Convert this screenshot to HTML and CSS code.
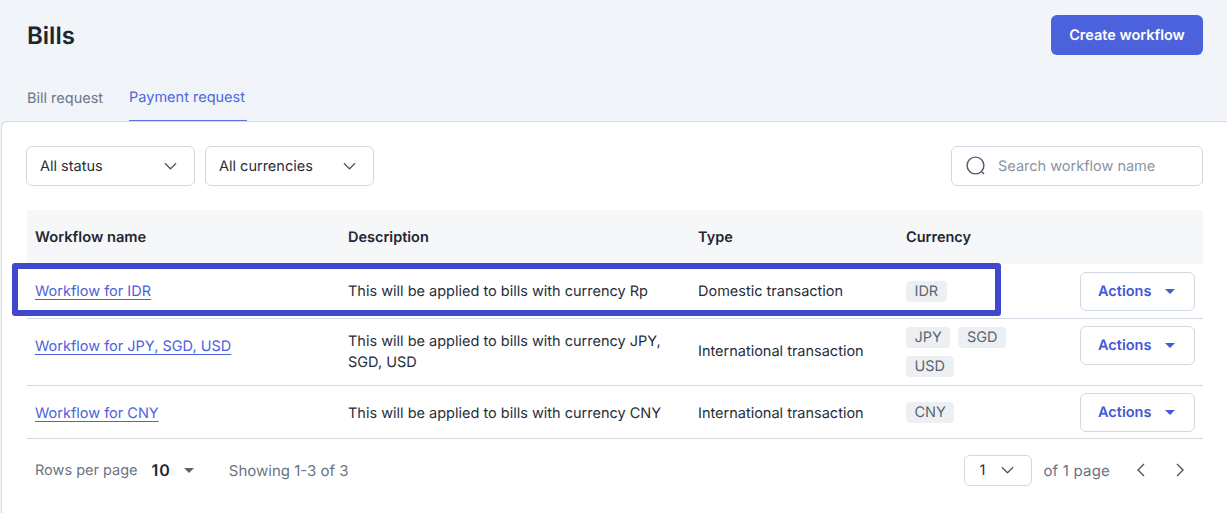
FILE: index.html
```html
<!DOCTYPE html>
<html lang="en">
<head>
<meta charset="utf-8">
<title>Bills</title>
<link rel="stylesheet" href="styles.css">
</head>
<body>
<header class="top">
  <h1 class="title">Bills</h1>
  <button class="primary">Create workflow</button>
</header>
<nav class="tabs">
  <a class="tab">Bill request</a>
  <a class="tab active">Payment request</a>
</nav>
<main class="card">
  <div class="filters">
    <div class="select status"><span>All status</span><svg class="chev" viewBox="0 0 14 8"><path d="M1 1l6 6 6-6"/></svg></div>
    <div class="select currency"><span>All currencies</span><svg class="chev" viewBox="0 0 14 8"><path d="M1 1l6 6 6-6"/></svg></div>
    <div class="search">
      <svg class="search-icon" viewBox="0 0 20 20"><circle cx="9.5" cy="9.5" r="8.4"/><path d="M16 16l2 2"/></svg>
      <span>Search workflow name</span>
    </div>
  </div>
  <div class="table-wrap">
    <table class="table">
      <thead>
        <tr><th class="c-name">Workflow name</th><th class="c-desc">Description</th><th class="c-type">Type</th><th class="c-cur">Currency</th><th class="c-act"></th></tr>
      </thead>
      <tbody>
        <tr class="r1">
          <td class="name"><a class="link">Workflow for IDR</a></td>
          <td>This will be applied to bills with currency Rp</td>
          <td>Domestic transaction</td>
          <td class="cur"><div class="tags"><span class="tag">IDR</span></div></td>
          <td class="act"><button class="actions">Actions<i class="caret"></i></button></td>
        </tr>
        <tr class="r2">
          <td class="name"><a class="link">Workflow for JPY, SGD, USD</a></td>
          <td>This will be applied to bills with currency JPY, SGD, USD</td>
          <td>International transaction</td>
          <td class="cur"><div class="tags"><span class="tag">JPY</span><span class="tag">SGD</span><span class="tag">USD</span></div></td>
          <td class="act"><button class="actions">Actions<i class="caret"></i></button></td>
        </tr>
        <tr class="r3">
          <td class="name"><a class="link">Workflow for CNY</a></td>
          <td>This will be applied to bills with currency CNY</td>
          <td>International transaction</td>
          <td class="cur"><div class="tags"><span class="tag">CNY</span></div></td>
          <td class="act"><button class="actions">Actions<i class="caret"></i></button></td>
        </tr>
      </tbody>
    </table>
    <div class="highlight"></div>
  </div>
  <footer class="pager">
    <span class="muted">Rows per page</span>
    <strong class="rows">10</strong>
    <i class="caret grey"></i>
    <span class="muted showing">Showing 1-3 of 3</span>
    <div class="pager-right">
      <div class="page-select"><span>1</span><svg class="chev" viewBox="0 0 14 8"><path d="M1 1l6 6 6-6"/></svg></div>
      <span class="muted pages">of 1 page</span>
      <svg class="nav prev" viewBox="0 0 8 14"><path d="M7 1L1 7l6 6"/></svg>
      <svg class="nav next" viewBox="0 0 8 14"><path d="M1 1l6 6-6 6"/></svg>
    </div>
  </footer>
</main>
</body>
</html>
```
FILE: styles.css
```css
* { box-sizing: border-box; }
html, body { margin: 0; height: 513px; overflow: hidden; }
body { background: #f1f4f9; font-family: Inter, "Liberation Sans", sans-serif; font-size: 14.5px; color: #1f2733; padding-top: 15px; text-rendering: geometricPrecision; }
.top { display: flex; justify-content: space-between; align-items: center; padding: 0 24px 0 27px; height: 40px; }
.title { margin: 0; font-size: 24px; font-weight: 600; color: #1c2530; }
.primary { width: 152px; height: 40px; border: 0; border-radius: 6px; background: #4b62dc; color: #fff; font: 600 14.5px Inter, sans-serif; text-rendering: geometricPrecision; }
.tabs { display: flex; gap: 26px; padding-left: 27px; margin-top: 14px; height: 52px; align-items: stretch; }
.tab { display: flex; align-items: center; color: #6c7585; padding-top: 6px; }
.tab.active { color: #4f66e0; border-bottom: 1px solid #5f75e6; padding-right: 2px; }
.card { background: #fff; margin-left: 1px; height: 392px; border-top: 1px solid #d5dae3; border-left: 1px solid #d5dae3; border-top-left-radius: 6px; padding: 24px 24px 0 24px; }
.filters { display: flex; gap: 10px; }
.select, .search, .page-select { display: flex; align-items: center; border: 1px solid #d2d8e2; border-radius: 6px; background: #fff; }
.select { width: 169px; height: 40px; justify-content: space-between; padding: 0 17px 0 13px; color: #252d39; }
.chev { width: 13px; height: 8px; fill: none; stroke: #4c5563; stroke-width: 1.3; }
.search { margin-left: auto; width: 252px; height: 40px; padding-left: 14px; color: #8a93a5; gap: 12px; }
.search-icon { width: 20px; height: 20px; fill: none; stroke: #4f5a6b; stroke-width: 1.4; }
.table-wrap { position: relative; margin: 24px 0 0 1px; }
.table { width: 1176px; border-collapse: collapse; table-layout: fixed; }
.table th { height: 54px; background: #f6f7f9; text-align: left; font-weight: 600; padding: 0 9px; }
.table th.c-name { font-size: 14.7px; padding-left: 8px; }
.table td { padding: 2px 9px 0; border-bottom: 1px solid #d3d9e4; line-height: 21px; color: #252d39; }
.table .r2 td { padding-top: 0; }
.table .r3 td { padding-top: 3px; }
.table td.name, .table .r2 td.name, .table .r3 td.name { padding: 17px 9px 0 8px; vertical-align: top; }
.table td.cur { padding-top: 1px; }
.c-name { width: 312px; }
.c-desc { width: 350px; }
.c-type { width: 208px; }
.c-cur { width: 174px; }
.r1 { height: 54px; }
.r2 { height: 67px; }
.r3 { height: 53px; }
.link { color: #4c62dc; text-decoration: underline; text-underline-offset: 3px; text-decoration-thickness: 1px; }
.tags { display: flex; flex-wrap: wrap; gap: 8px; max-width: 120px; }
.tag { height: 21px; display: flex; align-items: center; padding: 0 8.5px; border-radius: 4px; background: #edf0f3; color: #5b6472; }
.table td.act { padding: 8px 8px 0 0; vertical-align: top; }
.table .r2 td.act, .table .r3 td.act { padding-top: 7px; }
.actions { display: flex; margin-left: auto; width: 115px; height: 39px; border: 1px solid #d2d8e2; border-radius: 6px; background: #fff; color: #4258d6; font: 600 14.5px Inter, sans-serif; text-rendering: geometricPrecision; align-items: center; justify-content: flex-start; gap: 14px; padding: 0 0 0 17px; }
.caret { display: inline-block; width: 0; height: 0; border-left: 5px solid transparent; border-right: 5px solid transparent; border-top: 5px solid #4258d6; }
.caret.grey { border-top-color: #5b6472; margin-left: 13px; }
.highlight { position: absolute; left: -15px; top: 53px; width: 989px; height: 53px; border: 6px solid #4048cc; border-radius: 3px; pointer-events: none; }
.pager { display: flex; align-items: center; height: 63px; padding: 0 0 0 9px; }
.muted { color: #6a7382; }
.rows { margin-left: 14px; font-weight: 600; font-size: 16px; letter-spacing: 1px; }
.showing { margin-left: 35px; font-size: 15px; }
.pages { font-size: 15px; letter-spacing: .2px; }
.pager-right { margin-left: auto; display: flex; align-items: center; }
.page-select { width: 68px; height: 31px; padding: 0 17px 0 14px; justify-content: space-between; color: #252d39; margin-right: 11px; }
.nav { width: 8px; height: 14px; fill: none; stroke: #4c5563; stroke-width: 1.4; }
.prev { margin-left: 27px; }
.next { margin-left: 31px; margin-right: 19px; }
```
